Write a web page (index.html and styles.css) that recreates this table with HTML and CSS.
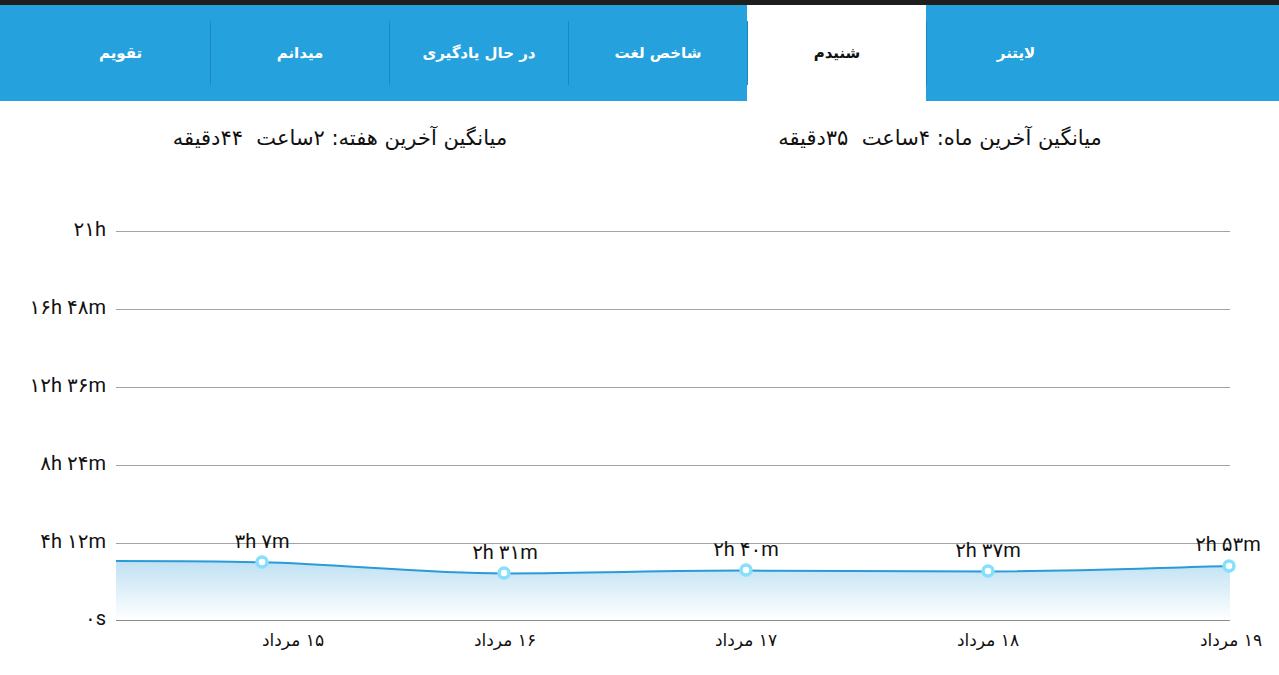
FILE: index.html
```html
<!DOCTYPE html>
<html lang="fa">
<head>
<meta charset="utf-8">
<title>آمار</title>
<link rel="stylesheet" href="styles.css">
</head>
<body>
<div class="topstrip"></div>
<nav class="tabs" dir="rtl">
  <div class="tab"><span class="tab-label">لایتنر</span></div>
  <div class="tab active"><span class="tab-label">شنیدم</span></div>
  <div class="tab"><span class="tab-label">شاخص لغت</span></div>
  <div class="tab"><span class="tab-label">در حال یادگیری</span></div>
  <div class="tab"><span class="tab-label">میدانم</span></div>
  <div class="tab"><span class="tab-label">تقویم</span></div>
</nav>
<section class="averages" dir="rtl">
  <div class="avg">میانگین آخرین ماه: ۴ساعت&nbsp; ۳۵دقیقه</div>
  <div class="avg">میانگین آخرین هفته: ۲ساعت&nbsp; ۴۴دقیقه</div>
</section>
<div class="chart-wrap">
<svg class="chart" width="1279" height="523" viewBox="0 152 1279 523" xmlns="http://www.w3.org/2000/svg">
  <defs>
    <linearGradient id="fill" x1="0" y1="0" x2="0" y2="1">
      <stop offset="0" stop-color="#bfe1f3"/>
      <stop offset="1" stop-color="#ffffff"/>
    </linearGradient>
  </defs>
  <g class="grid">
    <line x1="116" y1="231.5" x2="1230" y2="231.5"/>
    <line x1="116" y1="309.5" x2="1230" y2="309.5"/>
    <line x1="116" y1="387.5" x2="1230" y2="387.5"/>
    <line x1="116" y1="465.5" x2="1230" y2="465.5"/>
    <line x1="116" y1="543.5" x2="1230" y2="543.5"/>
  </g>
  <path class="area" d="M116,561 C180,561 220,561 262,562.3 C340,564 420,573.4 504,573.4 C590,573.4 660,570.6 746,570.6 C830,570.6 900,571.5 988,571.5 C1080,571.5 1150,568 1230,566 L1230,620 L116,620 Z"/>
  <line class="axis" x1="116" y1="620.5" x2="1230" y2="620.5"/>
  <path class="line" d="M116,561 C180,561 220,561 262,562.3 C340,564 420,573.4 504,573.4 C590,573.4 660,570.6 746,570.6 C830,570.6 900,571.5 988,571.5 C1080,571.5 1150,568 1230,566"/>
  <g class="ylabels">
    <text x="106" y="236">۲۱h</text>
    <text x="106" y="314">۱۶h ۴۸m</text>
    <text x="106" y="392">۱۲h ۳۶m</text>
    <text x="106" y="470">۸h ۲۴m</text>
    <text x="106" y="548">۴h ۱۲m</text>
    <text x="106" y="625">۰s</text>
  </g>
  <g class="vlabels">
    <text x="262" y="548">۳h ۷m</text>
    <text x="505" y="559">۲h ۳۱m</text>
    <text x="746" y="556">۲h ۴۰m</text>
    <text x="988" y="557">۲h ۳۷m</text>
    <text x="1228" y="551">۲h ۵۳m</text>
  </g>
  <g class="points">
    <circle cx="262" cy="562" r="5"/>
    <circle cx="504" cy="573" r="5"/>
    <circle cx="746" cy="570" r="5"/>
    <circle cx="988" cy="571" r="5"/>
    <circle cx="1229" cy="566" r="5"/>
  </g>
  <g class="xlabels">
    <text x="293" y="646">۱۵ مرداد</text>
    <text x="505" y="646">۱۶ مرداد</text>
    <text x="746" y="646">۱۷ مرداد</text>
    <text x="988" y="646">۱۸ مرداد</text>
    <text x="1231" y="646">۱۹ مرداد</text>
  </g>
</svg>
</div>
</body>
</html>
```
FILE: styles.css
```css
html, body {
  margin: 0;
  padding: 0;
  background: #ffffff;
  overflow: hidden;
}
body {
  width: 1279px;
  height: 675px;
  font-family: "DejaVu Sans", "Noto Sans", sans-serif;
  color: #111;
}
.topstrip {
  height: 5px;
  background: #1e1e1e;
}
.tabs {
  display: flex;
  height: 96px;
  background: #25a1dd;
  padding-right: 174px;
  box-sizing: border-box;
}
.tab {
  width: 179px;
  flex: 0 0 179px;
  padding: 16px 0;
  box-sizing: border-box;
  color: #ffffff;
  font-weight: bold;
  font-size: 15px;
}
.tab.active {
  background: #ffffff;
  color: #111111;
}
.tab-label {
  display: flex;
  height: 64px;
  align-items: center;
  justify-content: center;
  border-left: 1px solid #1b88c0;
  box-sizing: border-box;
}
.tab:last-child .tab-label {
  border-left: none;
}
.averages {
  display: grid;
  grid-template-columns: 1fr 1fr;
  padding: 24px 39px 0 40px;
  height: 51px;
  box-sizing: border-box;
}
.avg {
  text-align: center;
  font-size: 21px;
  line-height: 26px;
  color: #111;
}
.chart-wrap {
  height: 523px;
}
.chart {
  display: block;
}
.grid line {
  stroke: #a3a3a3;
  stroke-width: 1;
}
.axis {
  stroke: #8c8c8c;
  stroke-width: 1;
}
.area {
  fill: url(#fill);
}
.line {
  fill: none;
  stroke: #2a9bd7;
  stroke-width: 2;
}
.points circle {
  fill: #ffffff;
  stroke: #86dffb;
  stroke-width: 3.5;
}
.ylabels text {
  font-family: Roboto, "DejaVu Sans", sans-serif;
  font-size: 20px;
  fill: #111;
  text-anchor: end;
}
.vlabels text {
  font-family: Roboto, "DejaVu Sans", sans-serif;
  font-size: 20px;
  fill: #111;
  text-anchor: middle;
}
.xlabels text {
  font-family: "DejaVu Sans", sans-serif;
  font-size: 17px;
  fill: #111;
  text-anchor: middle;
  direction: rtl;
  unicode-bidi: embed;
}
```
